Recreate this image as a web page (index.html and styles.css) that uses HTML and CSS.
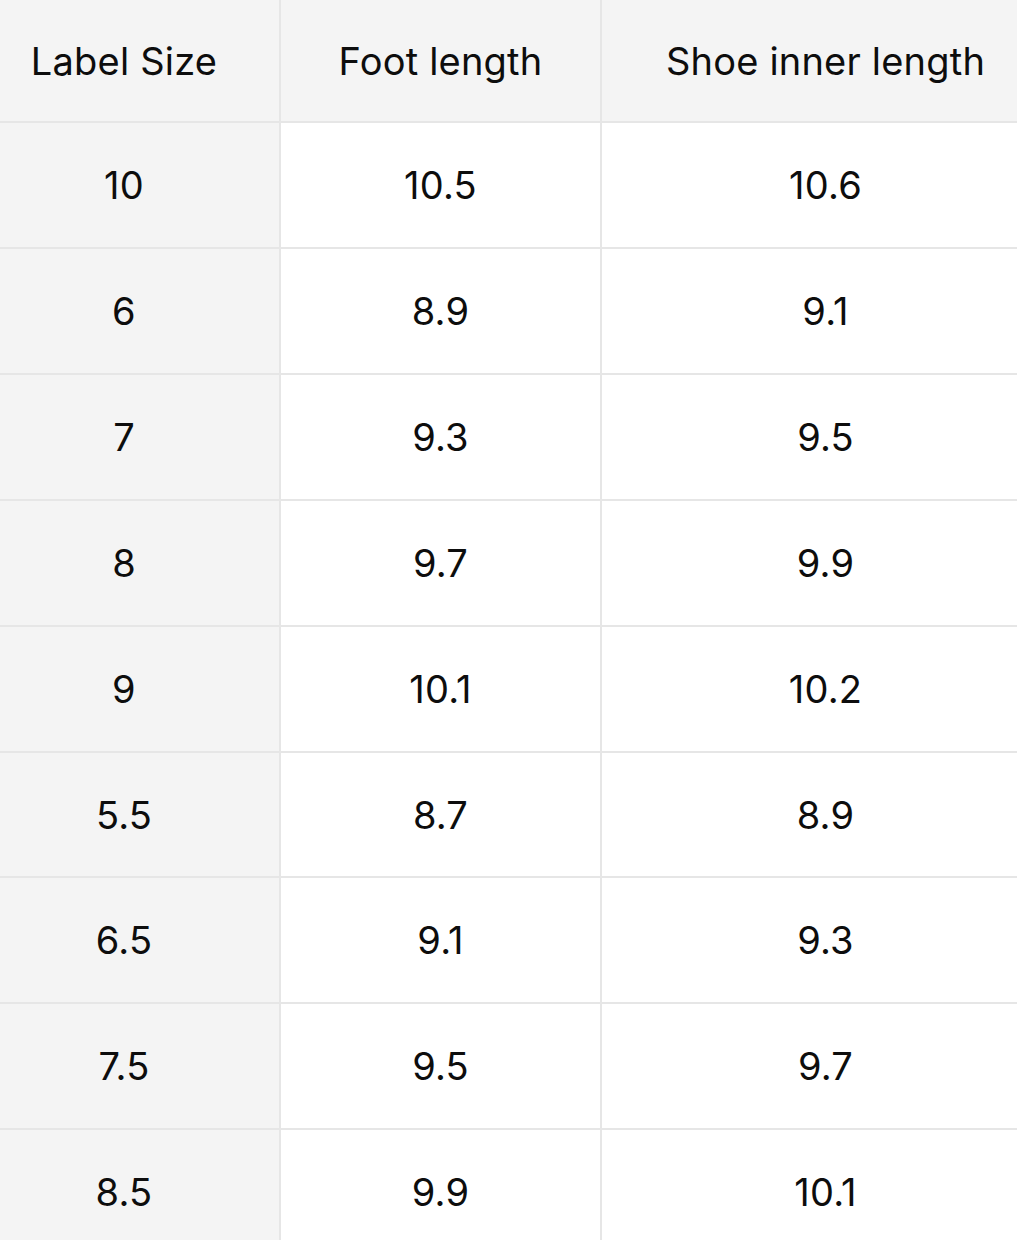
FILE: index.html
```html
<!DOCTYPE html>
<html lang="en">
<head>
<meta charset="utf-8">
<title>Size chart</title>
<link rel="stylesheet" href="styles.css">
</head>
<body>
<div class="chart">
  <div class="cell head c1">Label Size</div>
  <div class="cell head c2">Foot length</div>
  <div class="cell head c3">Shoe inner length</div>

  <div class="cell c1 side">10</div><div class="cell c2">10.5</div><div class="cell c3">10.6</div>
  <div class="cell c1 side">6</div><div class="cell c2">8.9</div><div class="cell c3">9.1</div>
  <div class="cell c1 side">7</div><div class="cell c2">9.3</div><div class="cell c3">9.5</div>
  <div class="cell c1 side">8</div><div class="cell c2">9.7</div><div class="cell c3">9.9</div>
  <div class="cell c1 side">9</div><div class="cell c2">10.1</div><div class="cell c3">10.2</div>
  <div class="cell c1 side">5.5</div><div class="cell c2">8.7</div><div class="cell c3">8.9</div>
  <div class="cell c1 side">6.5</div><div class="cell c2">9.1</div><div class="cell c3">9.3</div>
  <div class="cell c1 side">7.5</div><div class="cell c2">9.5</div><div class="cell c3">9.7</div>
  <div class="cell c1 side">8.5</div><div class="cell c2">9.9</div><div class="cell c3">10.1</div>
</div>
</body>
</html>
```
FILE: styles.css
```css
html, body {
  margin: 0;
  padding: 0;
  background: #ffffff;
  overflow: hidden;
}
body {
  width: 1017px;
  height: 1240px;
  font-family: Inter, "Noto Sans", "Liberation Sans", sans-serif;
  color: #0d0d0d;
}
.chart {
  display: grid;
  grid-template-columns: 279px 319px 1fr;
  grid-template-rows: 121px 124px 124px 124px 124px 124px 123px 124px 124px 124px;
  column-gap: 2px;
  row-gap: 2px;
  background: #e6e6e6;
  height: 1240px;
  overflow: hidden;
}
.cell {
  display: flex;
  align-items: center;
  justify-content: center;
  background: #ffffff;
  font-size: 38px;
  font-weight: 420;
  letter-spacing: 0.2px;
}
.head {
  background: #f4f4f4;
}
.side {
  background: #f4f4f4;
}
.c1 {
  padding-right: 31px;
}
.c3 {
  padding-left: 32px;
}
```
